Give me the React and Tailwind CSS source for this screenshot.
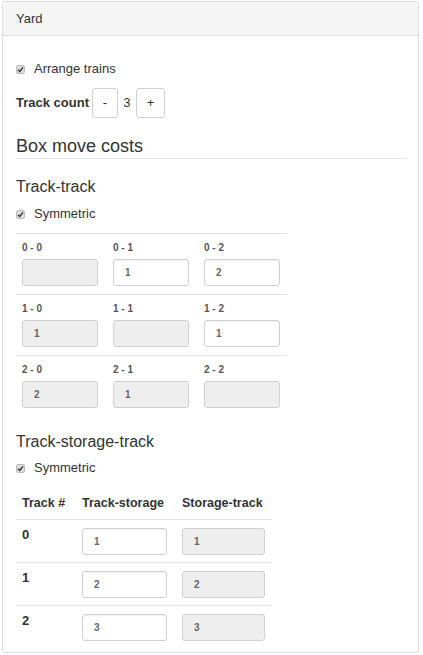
import React from "react";

const font = { fontFamily: '"Liberation Sans", Arial, sans-serif' };

function Check() {
  return (
    <span className="inline-flex items-center justify-center w-[9px] h-[9px] rounded-[2px] bg-[#dcdcdc] border border-[#bdbdbd]">
      <svg width="7" height="7" viewBox="0 0 8 8">
        <path d="M1.2 4.2 L3.2 6.2 L6.8 1.6" fill="none" stroke="#333" strokeWidth="1.6" />
      </svg>
    </span>
  );
}

function CheckRow({ label, className }) {
  return (
    <div className={"flex items-center h-[18px] " + className}>
      <span className="w-[18px] flex items-center"><Check /></span>
      <span className="text-[13px] text-[#333]">{label}</span>
    </div>
  );
}

function Input({ value, disabled, w }) {
  return (
    <div
      className={
        "h-[27px] rounded-[3px] border border-[#d0d0d0] flex items-center pl-[11px] text-[10px] font-bold text-[#666] " +
        (disabled ? "bg-[#eeeeee]" : "bg-white shadow-[inset_0_1px_1px_rgba(0,0,0,0.06)]") +
        " " + w
      }
    >
      {value}
    </div>
  );
}

const tt = [
  [["0 - 0", "", true], ["0 - 1", "1", false], ["0 - 2", "2", false]],
  [["1 - 0", "1", true], ["1 - 1", "", true], ["1 - 2", "1", false]],
  [["2 - 0", "2", true], ["2 - 1", "1", true], ["2 - 2", "", true]],
];

const tst = [
  ["0", "1"],
  ["1", "2"],
  ["2", "3"],
];

export default function App() {
  return (
    <div className="bg-white w-[423px] h-[655px] pt-[1px] pl-[2px]" style={font}>
      <div className="w-[417px] h-[652px] border border-[#dddddd] rounded-[3px] overflow-hidden">
        <div className="h-[34px] bg-[#f5f5f5] border-b border-[#dddddd] flex items-center px-[13px] text-[13px] text-[#333]">
          Yard
        </div>
        <div className="px-[13px] pt-[24px]">
          <CheckRow label="Arrange trains" />
          <div className="mt-[10px] h-[30px] flex items-center">
            <span className="text-[13px] font-bold text-[#333] mr-[3px]">Track count</span>
            <div className="w-[26px] h-[30px] border border-[#d0d0d0] rounded-[3px] flex items-center justify-center text-[13px] text-[#333]">-</div>
            <span className="w-[18px] text-center text-[13px] text-[#333]">3</span>
            <div className="w-[29px] h-[30px] border border-[#d0d0d0] rounded-[3px] flex items-center justify-center text-[13px] text-[#333]">+</div>
          </div>
          <div className="mt-[18px] pb-[2px] border-b border-[#e5e5e5] w-[391px]">
            <div className="h-[20px] leading-[20px] text-[18px] text-[#333]">Box move costs</div>
          </div>
          <div className="mt-[19px] h-[18px] leading-[18px] text-[16px] text-[#333]">Track-track</div>
          <CheckRow label="Symmetric" className="mt-[9px]" />
          <div className="mt-[10px] w-[271px]">
            {tt.map((row, i) => (
              <div key={i} className="border-t border-[#e3e3e3] grid grid-cols-[91px_91px_89px] pt-[8px] pb-[8px]">
                {row.map(([lab, v, d]) => (
                  <div key={lab} className="pl-[6px]">
                    <div className="h-[12px] leading-[12px] text-[10px] font-bold text-[#555]">{lab}</div>
                    <div className="mt-[5px]">
                      <Input value={v} disabled={d} w="w-[76px]" />
                    </div>
                  </div>
                ))}
              </div>
            ))}
          </div>
          <div className="mt-[17px] h-[18px] leading-[18px] text-[16px] text-[#333]">Track-storage-track</div>
          <CheckRow label="Symmetric" className="mt-[8px]" />
          <div className="mt-[18px] w-[256px]">
            <div className="grid grid-cols-[60px_100px_96px] pb-[8px] text-[12.5px] font-bold text-[#333] h-[25px] leading-[16px] border-b border-[#e3e3e3]">
              <div className="pl-[6px]">Track #</div>
              <div className="pl-[6px]">Track-storage</div>
              <div className="pl-[6px]">Storage-track</div>
            </div>
            {tst.map(([n, v], i) => (
              <div key={n} className={"grid grid-cols-[60px_100px_96px] pt-[8px] pb-[7px] " + (i > 0 ? "border-t border-[#e3e3e3]" : "")}>
                <div className="pl-[6px] text-[13px] font-bold text-[#333] leading-[14px]">{n}</div>
                <div className="pl-[6px]"><Input value={v} w="w-[85px]" /></div>
                <div className="pl-[6px]"><Input value={v} disabled w="w-[83px]" /></div>
              </div>
            ))}
          </div>
        </div>
      </div>
    </div>
  );
}
